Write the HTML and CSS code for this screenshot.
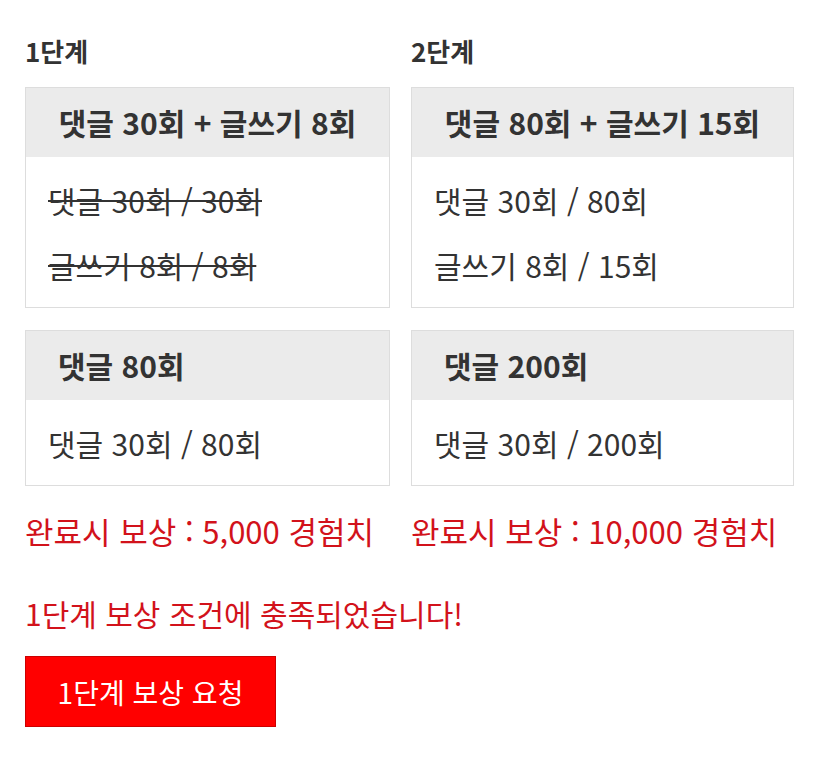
FILE: index.html
```html
<!DOCTYPE html>
<html lang="ko">
<head>
    <meta charset="UTF-8">
    <meta name="viewport" content="width=device-width, initial-scale=1.0">
    <title>단계별 보상</title>
    <link rel="stylesheet" href="styles.css">
</head>
<body>
    <div class="mission">
        <div class="stages">
            <h2 class="stage-title">1단계</h2>
            <h2 class="stage-title">2단계</h2>

            <div class="card">
                <div class="card-head center">댓글 30회 + 글쓰기 8회</div>
                <div class="card-body">
                    <p class="done">댓글 30회 / 30회</p>
                    <p class="done">글쓰기 8회 / 8회</p>
                </div>
            </div>
            <div class="card">
                <div class="card-head center">댓글 80회 + 글쓰기 15회</div>
                <div class="card-body">
                    <p>댓글 30회 / 80회</p>
                    <p>글쓰기 8회 / 15회</p>
                </div>
            </div>

            <div class="card">
                <div class="card-head">댓글 80회</div>
                <div class="card-body">
                    <p>댓글 30회 / 80회</p>
                </div>
            </div>
            <div class="card">
                <div class="card-head">댓글 200회</div>
                <div class="card-body">
                    <p>댓글 30회 / 200회</p>
                </div>
            </div>

            <div class="reward">완료시 보상 : 5,000 경험치</div>
            <div class="reward">완료시 보상 : 10,000 경험치</div>
        </div>

        <p class="notice">1단계 보상 조건에 충족되었습니다!</p>
        <button class="claim-btn">1단계 보상 요청</button>
    </div>
</body>
</html>
```

FILE: styles.css
```css
body {
    margin: 0;
    padding: 0 25px;
    background-color: #fff;
    color: #333;
    font-family: "Noto Sans CJK KR", "Noto Sans", sans-serif;
}
.mission {
    padding-top: 33px;
}
.stages {
    display: grid;
    grid-template-columns: 365px 383px;
    column-gap: 21px;
    row-gap: 22px;
}
.stage-title {
    margin: 0 0 -4px;
    font-size: 26px;
    font-weight: bold;
    line-height: 36px;
    color: #333;
}
.card {
    border: 1px solid #ddd;
    background-color: #fff;
}
.card-head {
    background-color: #ebebeb;
    height: 69px;
    line-height: 69px;
    padding: 0 32px;
    font-size: 30px;
    font-weight: bold;
    white-space: nowrap;
}
.card-head.center {
    text-align: center;
    padding: 0;
}
.card-body {
    padding: 11px 22px 9px;
}
.card-body p {
    margin: 0;
    font-size: 30px;
    line-height: 65px;
}
.done {
    text-decoration: line-through;
    text-decoration-thickness: 2px;
}
.reward {
    font-size: 31px;
    line-height: 46px;
    color: #d2121b;
    white-space: nowrap;
}
.notice {
    margin: 38px 0 22px;
    font-size: 30px;
    line-height: 42px;
    color: #d2121b;
}
.claim-btn {
    width: 251px;
    height: 71px;
    background-color: #ff0000;
    color: #fff;
    border: 1px solid #c00;
    font-family: inherit;
    font-size: 28px;
    cursor: pointer;
}
```
